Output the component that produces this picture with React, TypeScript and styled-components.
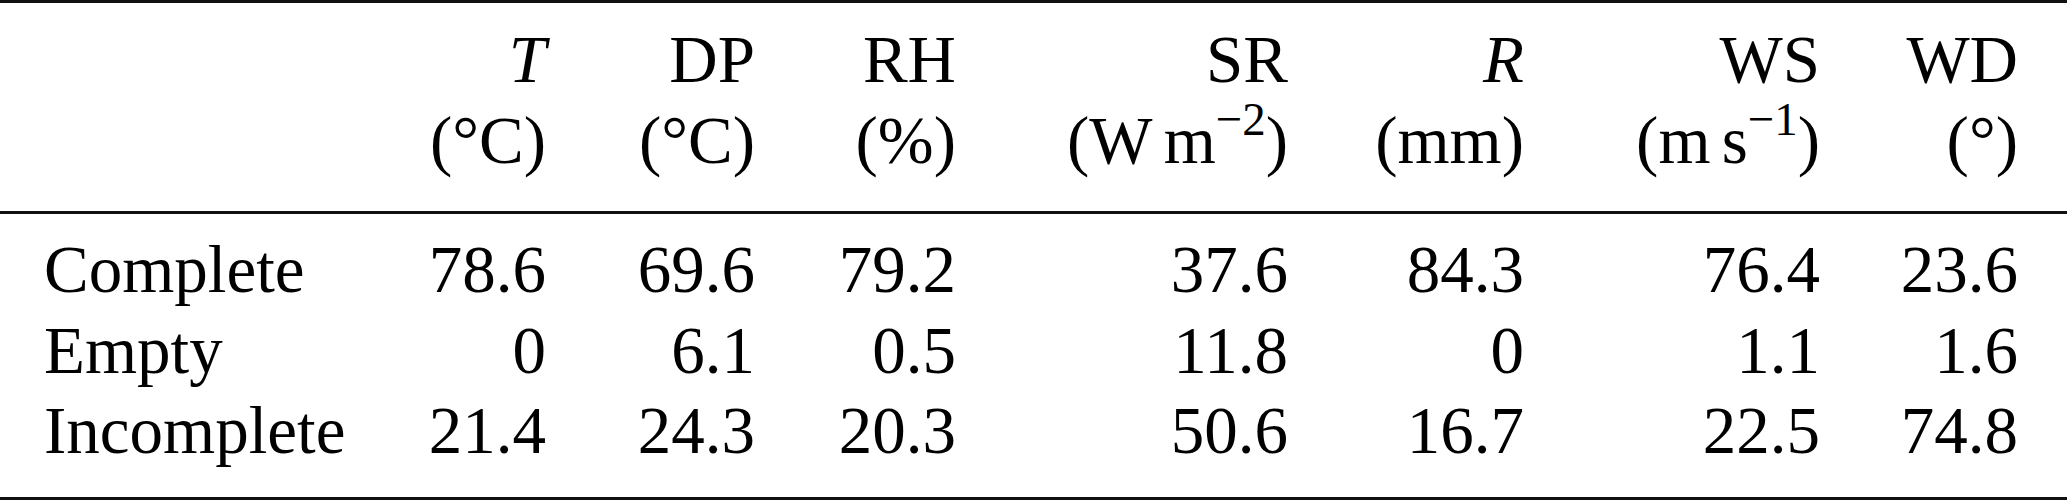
import styled, { createGlobalStyle } from 'styled-components';

type Row = {
  label: string;
  values: string[];
};

const ROWS: Row[] = [
  { label: 'Complete', values: ['78.6', '69.6', '79.2', '37.6', '84.3', '76.4', '23.6'] },
  { label: 'Empty', values: ['0', '6.1', '0.5', '11.8', '0', '1.1', '1.6'] },
  { label: 'Incomplete', values: ['21.4', '24.3', '20.3', '50.6', '16.7', '22.5', '74.8'] },
];

function App() {
  return (
    <>
      <GlobalStyle />
      <Table>
        <Rule />
        <Head>
          <HeadCell />
          <HeadCell>
            <Line><Italic>T</Italic></Line>
            <Line>(°C)</Line>
          </HeadCell>
          <HeadCell>
            <Line>DP</Line>
            <Line>(°C)</Line>
          </HeadCell>
          <HeadCell>
            <Line>RH</Line>
            <Line>(%)</Line>
          </HeadCell>
          <HeadCell>
            <Line>SR</Line>
            <Line>
              (W<Thin />m<Sup>−2</Sup>)
            </Line>
          </HeadCell>
          <HeadCell>
            <Line><Italic>R</Italic></Line>
            <Line>(mm)</Line>
          </HeadCell>
          <HeadCell>
            <Line>WS</Line>
            <Line>
              (m<Thin />s<Sup>−1</Sup>)
            </Line>
          </HeadCell>
          <HeadCell>
            <Line>WD</Line>
            <Line>(°)</Line>
          </HeadCell>
        </Head>
        <Rule />
        <Body>
          {ROWS.map((row) => (
            <BodyRow key={row.label}>
              <LabelCell>{row.label}</LabelCell>
              {row.values.map((v, i) => (
                <NumCell key={i}>{v}</NumCell>
              ))}
            </BodyRow>
          ))}
        </Body>
        <Rule />
      </Table>
    </>
  );
}

export default App;

const GlobalStyle = createGlobalStyle`
  html, body {
    margin: 0;
    padding: 0;
    background: #ffffff;
  }
`;

const COLUMNS = '381px 205px 209px 201px 332px 236px 296px 198px';

const Table = styled.div`
  width: 2067px;
  font-family: "Liberation Serif", "Times New Roman", Times, Tinos,
    "Nimbus Roman", "Nimbus Roman No9 L", "TeX Gyre Termes", FreeSerif,
    "Noto Serif", "DejaVu Serif", Georgia, serif;
  font-size: 67px;
  line-height: 80.5px;
  color: #000;
`;

const Rule = styled.div`
  height: 3px;
  background: #111;
`;

const Head = styled.div`
  display: grid;
  grid-template-columns: ${COLUMNS};
  padding: 16px 0 31px;
`;

const HeadCell = styled.div`
  display: flex;
  flex-direction: column;
  align-items: flex-end;
  padding-right: 40px;
`;

const Line = styled.div`
  white-space: nowrap;
`;

const Italic = styled.span`
  font-style: italic;
`;

const Thin = styled.span`
  display: inline-block;
  width: 0.167em;
`;

const Sup = styled.span`
  font-size: 0.7em;
  line-height: 0;
  vertical-align: 0.6em;
`;

const Body = styled.div`
  padding: 15px 0 26px;
`;

const BodyRow = styled.div`
  display: grid;
  grid-template-columns: ${COLUMNS};
`;

const LabelCell = styled.div`
  padding-left: 44px;
  white-space: nowrap;
`;

const NumCell = styled.div`
  text-align: right;
  padding-right: 40px;
`;
